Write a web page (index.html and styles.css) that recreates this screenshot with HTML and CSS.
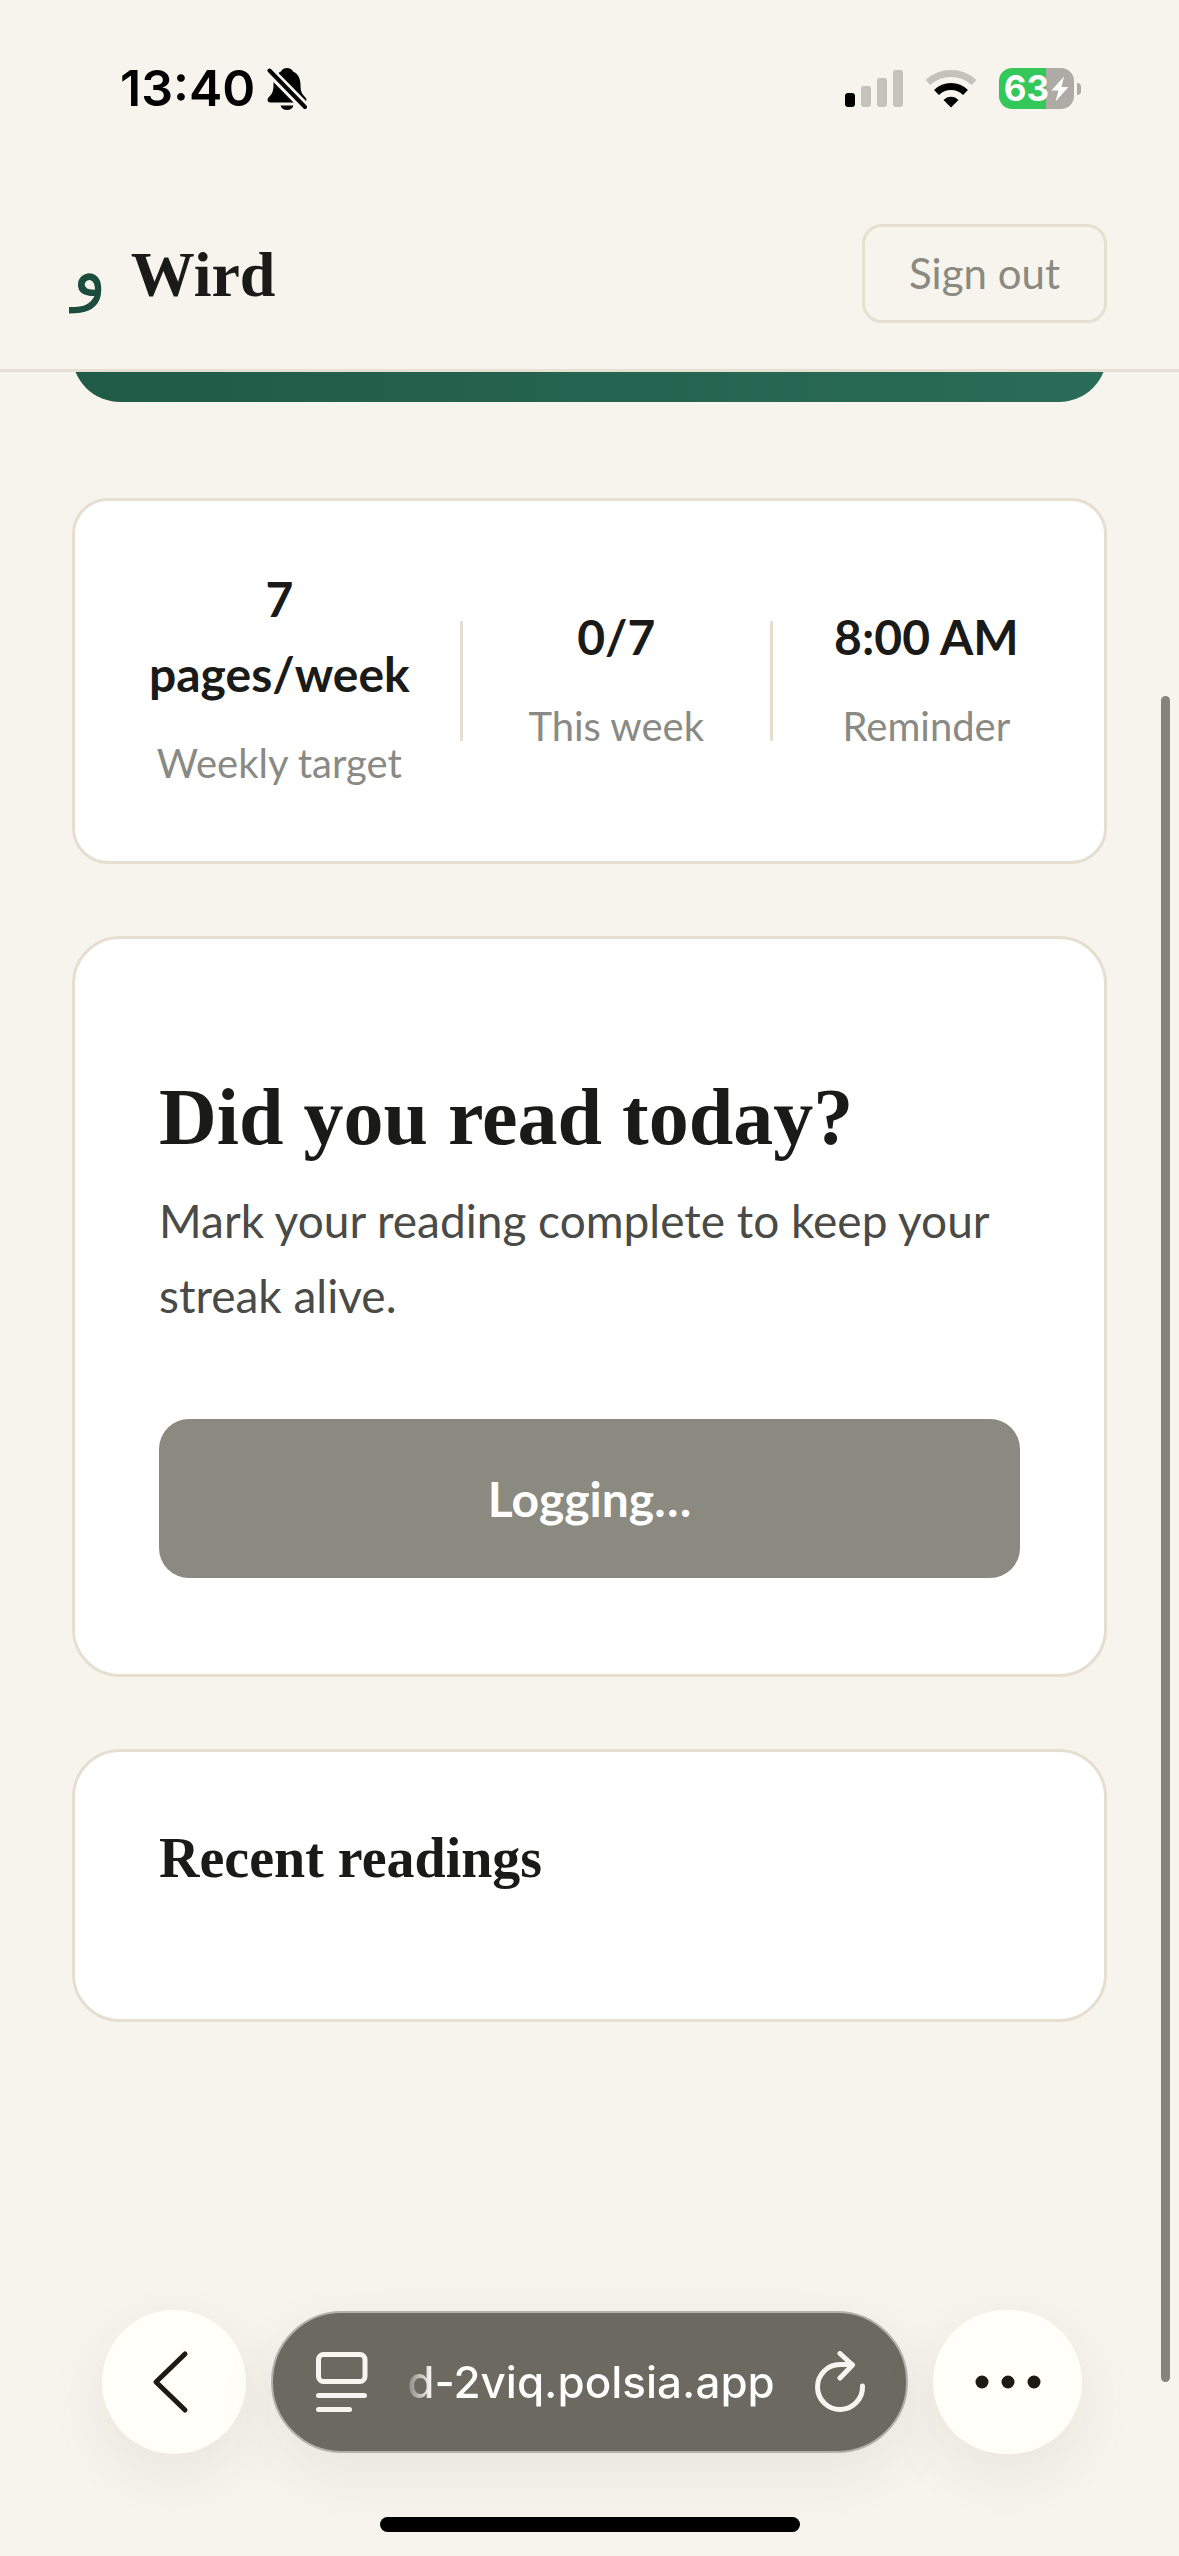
FILE: index.html
```html
<!DOCTYPE html>
<html lang="en">

<head>
    <meta charset="UTF-8">
    <meta name="viewport" content="width=device-width, initial-scale=1.0">
    <title>Wird</title>
    <link rel="stylesheet" href="styles.css">
</head>

<body>

    <div class="status-bar">
        <div class="status-left">
            <span class="time">13:40</span>
            <svg class="bell" width="40" height="44" viewBox="0 0 40 44">
                <path d="M20 1c-3 0-5 1.500-6 3.500C8.500 7 6.500 12 6.500 18c0 7-2 9.500-4.500 12-2.500 2.500-1.500 5.500 1.500 5.500h33c3 0 4-3 1.500-5.500-2.500-2.500-4.500-5-4.500-12 0-6-2-11-7.500-13.500C25 2.500 23 1 20 1z" />
                <path d="M13.500 38.500h13c-1 3-3.500 4.500-6.500 4.500s-5.500-1.500-6.500-4.500z" />
                <path class="bell-gap" d="M2 3.500 38 40" />
                <path class="bell-slash" d="M2.500 3.500 38 40" />
            </svg>
        </div>
        <div class="status-right">
            <svg width="58" height="40" viewBox="0 0 58 40">
                <rect x="0" y="24" width="10" height="14" rx="3" />
                <rect class="dim" x="16" y="17" width="10" height="21" rx="3" />
                <rect class="dim" x="32" y="9" width="10" height="29" rx="3" />
                <rect class="dim" x="48" y="1" width="10" height="37" rx="3" />
            </svg>
            <svg width="52" height="40" viewBox="0 0 52 40">
                <path class="wifi dim-line" d="M3 13.500C16 1.500 36 1.500 49 13.500" />
                <path class="wifi" d="M11.500 23.500C19.500 15.500 32.500 15.500 40.500 23.500" />
                <path d="M26 38.500l-7.500-7.500c4-4.500 11-4.500 15 0z" />
            </svg>
            <div class="battery">
                <div class="battery-body">
                    <span>63</span>
                    <svg width="18" height="26" viewBox="0 0 18 26">
                        <path d="M13 .5.500 14.500h7L4.500 25.500 17.500 11h-7z" />
                    </svg>
                </div>
                <div class="battery-tip"></div>
            </div>
        </div>
    </div>

    <header class="header">
        <a class="logo" href="#">
            <span class="logo-mark" lang="ar">و</span>
            <span class="logo-text">Wird</span>
        </a>
        <button type="button" class="sign-out">Sign out</button>
    </header>

    <main class="content">
        <div class="hero-end"></div>

        <section class="stats">
            <div class="stat">
                <div class="stat-value">7 pages/week</div>
                <div class="stat-label">Weekly target</div>
            </div>
            <div class="stat-divider"></div>
            <div class="stat">
                <div class="stat-value">0/7</div>
                <div class="stat-label">This week</div>
            </div>
            <div class="stat-divider"></div>
            <div class="stat">
                <div class="stat-value">8:00 AM</div>
                <div class="stat-label">Reminder</div>
            </div>
        </section>

        <section class="card card-log">
            <h2>Did you read today?</h2>
            <p>Mark your reading complete to keep your streak alive.</p>
            <button type="button" class="log-button" disabled>Logging…</button>
        </section>

        <section class="card card-recent">
            <h3>Recent readings</h3>
        </section>
    </main>

    <nav class="toolbar">
        <button type="button" class="round" aria-label="Back">
            <svg width="48" height="64" viewBox="0 0 48 64">
                <path class="chevron" d="M35 4 6 32l29 28" />
            </svg>
        </button>
        <div class="address">
            <button type="button" aria-label="Page menu">
                <svg width="52" height="62" viewBox="0 0 52 62">
                    <rect class="line" x="2.500" y="3.500" width="46.500" height="27" rx="5" />
                    <path class="line" d="M2.500 44.500h46M2.500 58.500h31" />
                </svg>
            </button>
            <span class="url">d-2viq.polsia.app</span>
            <button type="button" aria-label="Reload">
                <svg width="52" height="62" viewBox="0 0 52 62">
                    <path class="line" d="M48.500 35A22.500 22.500 0 1 1 26 13.500H38" />
                    <path class="line" d="M26 2.500 38.500 14 26 27" />
                </svg>
            </button>
        </div>
        <button type="button" class="round more" aria-label="More">
            <svg width="66" height="14" viewBox="0 0 66 14">
                <circle cx="7" cy="7" r="6.500" />
                <circle cx="33" cy="7" r="6.500" />
                <circle cx="59" cy="7" r="6.500" />
            </svg>
        </button>
    </nav>
    <div class="home-indicator"></div>

    <div class="scroll-thumb"></div>

</body>

</html>
```

FILE: styles.css
```css
* {
    box-sizing: border-box;
}

body {
    position: relative;
    display: flex;
    flex-direction: column;
    min-height: 100vh;
    margin: 0;
    background-color: #f7f4ed;
    color: #1a1a18;
    font-family: Lato, sans-serif;
    font-size: 46px;
    line-height: 75px;
}

h2,
h3,
p {
    margin: 0;
}

button {
    padding: 0;
    border: none;
    background: none;
    color: inherit;
    font-family: inherit;
}

svg {
    display: block;
}

/* Status bar */
.status-bar {
    display: flex;
    align-items: center;
    justify-content: space-between;
    height: 177px;
    padding: 0 98px 0 120px;
    color: #000;
    font-family: Inter, sans-serif;
}

.status-left,
.status-right {
    display: flex;
    align-items: center;
}

.status-left {
    gap: 12px;
}

.status-right {
    gap: 22px;
}

.time {
    font-size: 50px;
    font-weight: 600;
}

.bell-slash {
    stroke: #000;
    stroke-width: 4;
    stroke-linecap: round;
}

.bell-gap {
    stroke: #f7f4ed;
    stroke-width: 10;
}

.dim {
    fill: #c5c2bc;
}

.wifi {
    fill: none;
    stroke: #000;
    stroke-width: 7;
}

.wifi.dim-line {
    stroke: #c5c2bc;
}

.battery {
    display: flex;
    align-items: center;
    gap: 3px;
}

.battery-body {
    display: flex;
    align-items: center;
    justify-content: center;
    gap: 2px;
    width: 75px;
    height: 41px;
    border-radius: 13px;
    background: linear-gradient(to right, #34c759 63%, #aeaba6 63%);
    color: #fff;
    fill: #fff;
    font-size: 35px;
    font-weight: 700;
    line-height: 41px;
}

.battery-tip {
    width: 4px;
    height: 12px;
    border-radius: 0 4px 4px 0;
    background-color: #aeaba6;
}

/* Page header */
.header {
    display: flex;
    align-items: center;
    justify-content: space-between;
    height: 195px;
    padding: 0 72px;
    border-bottom: 3px solid #e6e0d4;
}

.logo {
    display: flex;
    align-items: baseline;
    gap: 24px;
    color: inherit;
    text-decoration: none;
}

.logo-mark {
    color: #1b4d3e;
    font-family: "DejaVu Sans", sans-serif;
    font-size: 72px;
}

.logo-text {
    font-family: "Liberation Serif", serif;
    font-size: 64px;
    font-weight: 700;
}

.sign-out {
    padding: 0 44px;
    border: 3px solid #e5e0cf;
    border-radius: 20px;
    color: #8a8a80;
    font-size: 42px;
    line-height: 93px;
}

/* Content */
.content {
    flex: 1;
    padding: 0 72px;
}

.hero-end {
    height: 30px;
    margin-bottom: 96px;
    overflow: hidden;
}

.hero-end::before {
    content: "";
    display: block;
    height: 120px;
    margin-top: -90px;
    border-radius: 48px;
    background: linear-gradient(to right, #1f5b47, #2a6c57);
}

.stats {
    display: flex;
    align-items: center;
    margin-bottom: 72px;
    padding: 60px 24px;
    border: 3px solid #e6dfd0;
    border-radius: 36px;
    background-color: #fff;
}

.stat {
    flex: 1;
    padding: 0 50px 6px;
    text-align: center;
}

.stat-value {
    font-size: 48px;
    font-weight: 700;
}

.stat-label {
    margin-top: 20px;
    color: #8a8a85;
    font-size: 40px;
    line-height: 64px;
    white-space: nowrap;
}

.stat-divider {
    width: 3px;
    height: 120px;
    background-color: #e6dfd0;
}

.card {
    margin-bottom: 72px;
    border: 3px solid #e6dfd0;
    border-radius: 48px;
    background-color: #fff;
}

.card h2,
.card h3 {
    font-family: "Liberation Serif", serif;
    font-weight: 700;
}

.card-log {
    padding: 130px 84px 96px;
}

.card-log h2 {
    margin-bottom: 18px;
    font-size: 80px;
    line-height: 96px;
}

.card-log p {
    margin-bottom: 86px;
    color: #4a4a46;
}

.log-button {
    display: block;
    width: 100%;
    border-radius: 30px;
    background-color: #8a8a80;
    color: #fff;
    font-size: 48px;
    font-weight: 700;
    line-height: 159px;
}

.card-recent {
    padding: 70px 84px 125px;
}

.card-recent h3 {
    font-size: 56px;
    line-height: 72px;
}

/* Browser toolbar */
.toolbar {
    display: flex;
    align-items: center;
    gap: 25px;
    margin-bottom: 63px;
    padding: 0 97px 0 102px;
}

.round {
    display: flex;
    align-items: center;
    justify-content: center;
    width: 144px;
    height: 144px;
    border-radius: 72px;
    background-color: #fffef8;
    box-shadow: 0 20px 60px rgba(60, 60, 50, 0.08);
    fill: #1c1a12;
}

.more {
    width: 149px;
}

.chevron {
    fill: none;
    stroke: #1c1a12;
    stroke-width: 5;
    stroke-linecap: round;
    stroke-linejoin: round;
}

.address {
    flex: 1;
    display: flex;
    align-items: center;
    justify-content: space-between;
    height: 142px;
    padding: 0 40px 0 43px;
    border: 2px solid #b3b1a9;
    border-radius: 71px;
    background-color: #6c6960;
    box-shadow: 0 20px 60px rgba(60, 60, 50, 0.08);
}

.line {
    fill: none;
    stroke: #f8f5f0;
    stroke-width: 5;
    stroke-linecap: round;
    stroke-linejoin: round;
}

.url {
    background: linear-gradient(to right, #86847c, #fff 26px);
    background-clip: text;
    color: transparent;
    font-family: Inter, sans-serif;
    font-size: 44px;
    font-weight: 500;
}

.home-indicator {
    width: 420px;
    height: 15px;
    margin: 0 auto 24px;
    border-radius: 8px;
    background-color: #000;
}

.scroll-thumb {
    position: absolute;
    top: 696px;
    right: 9px;
    bottom: 174px;
    width: 9px;
    border-radius: 5px;
    background-color: #85837d;
}
```
